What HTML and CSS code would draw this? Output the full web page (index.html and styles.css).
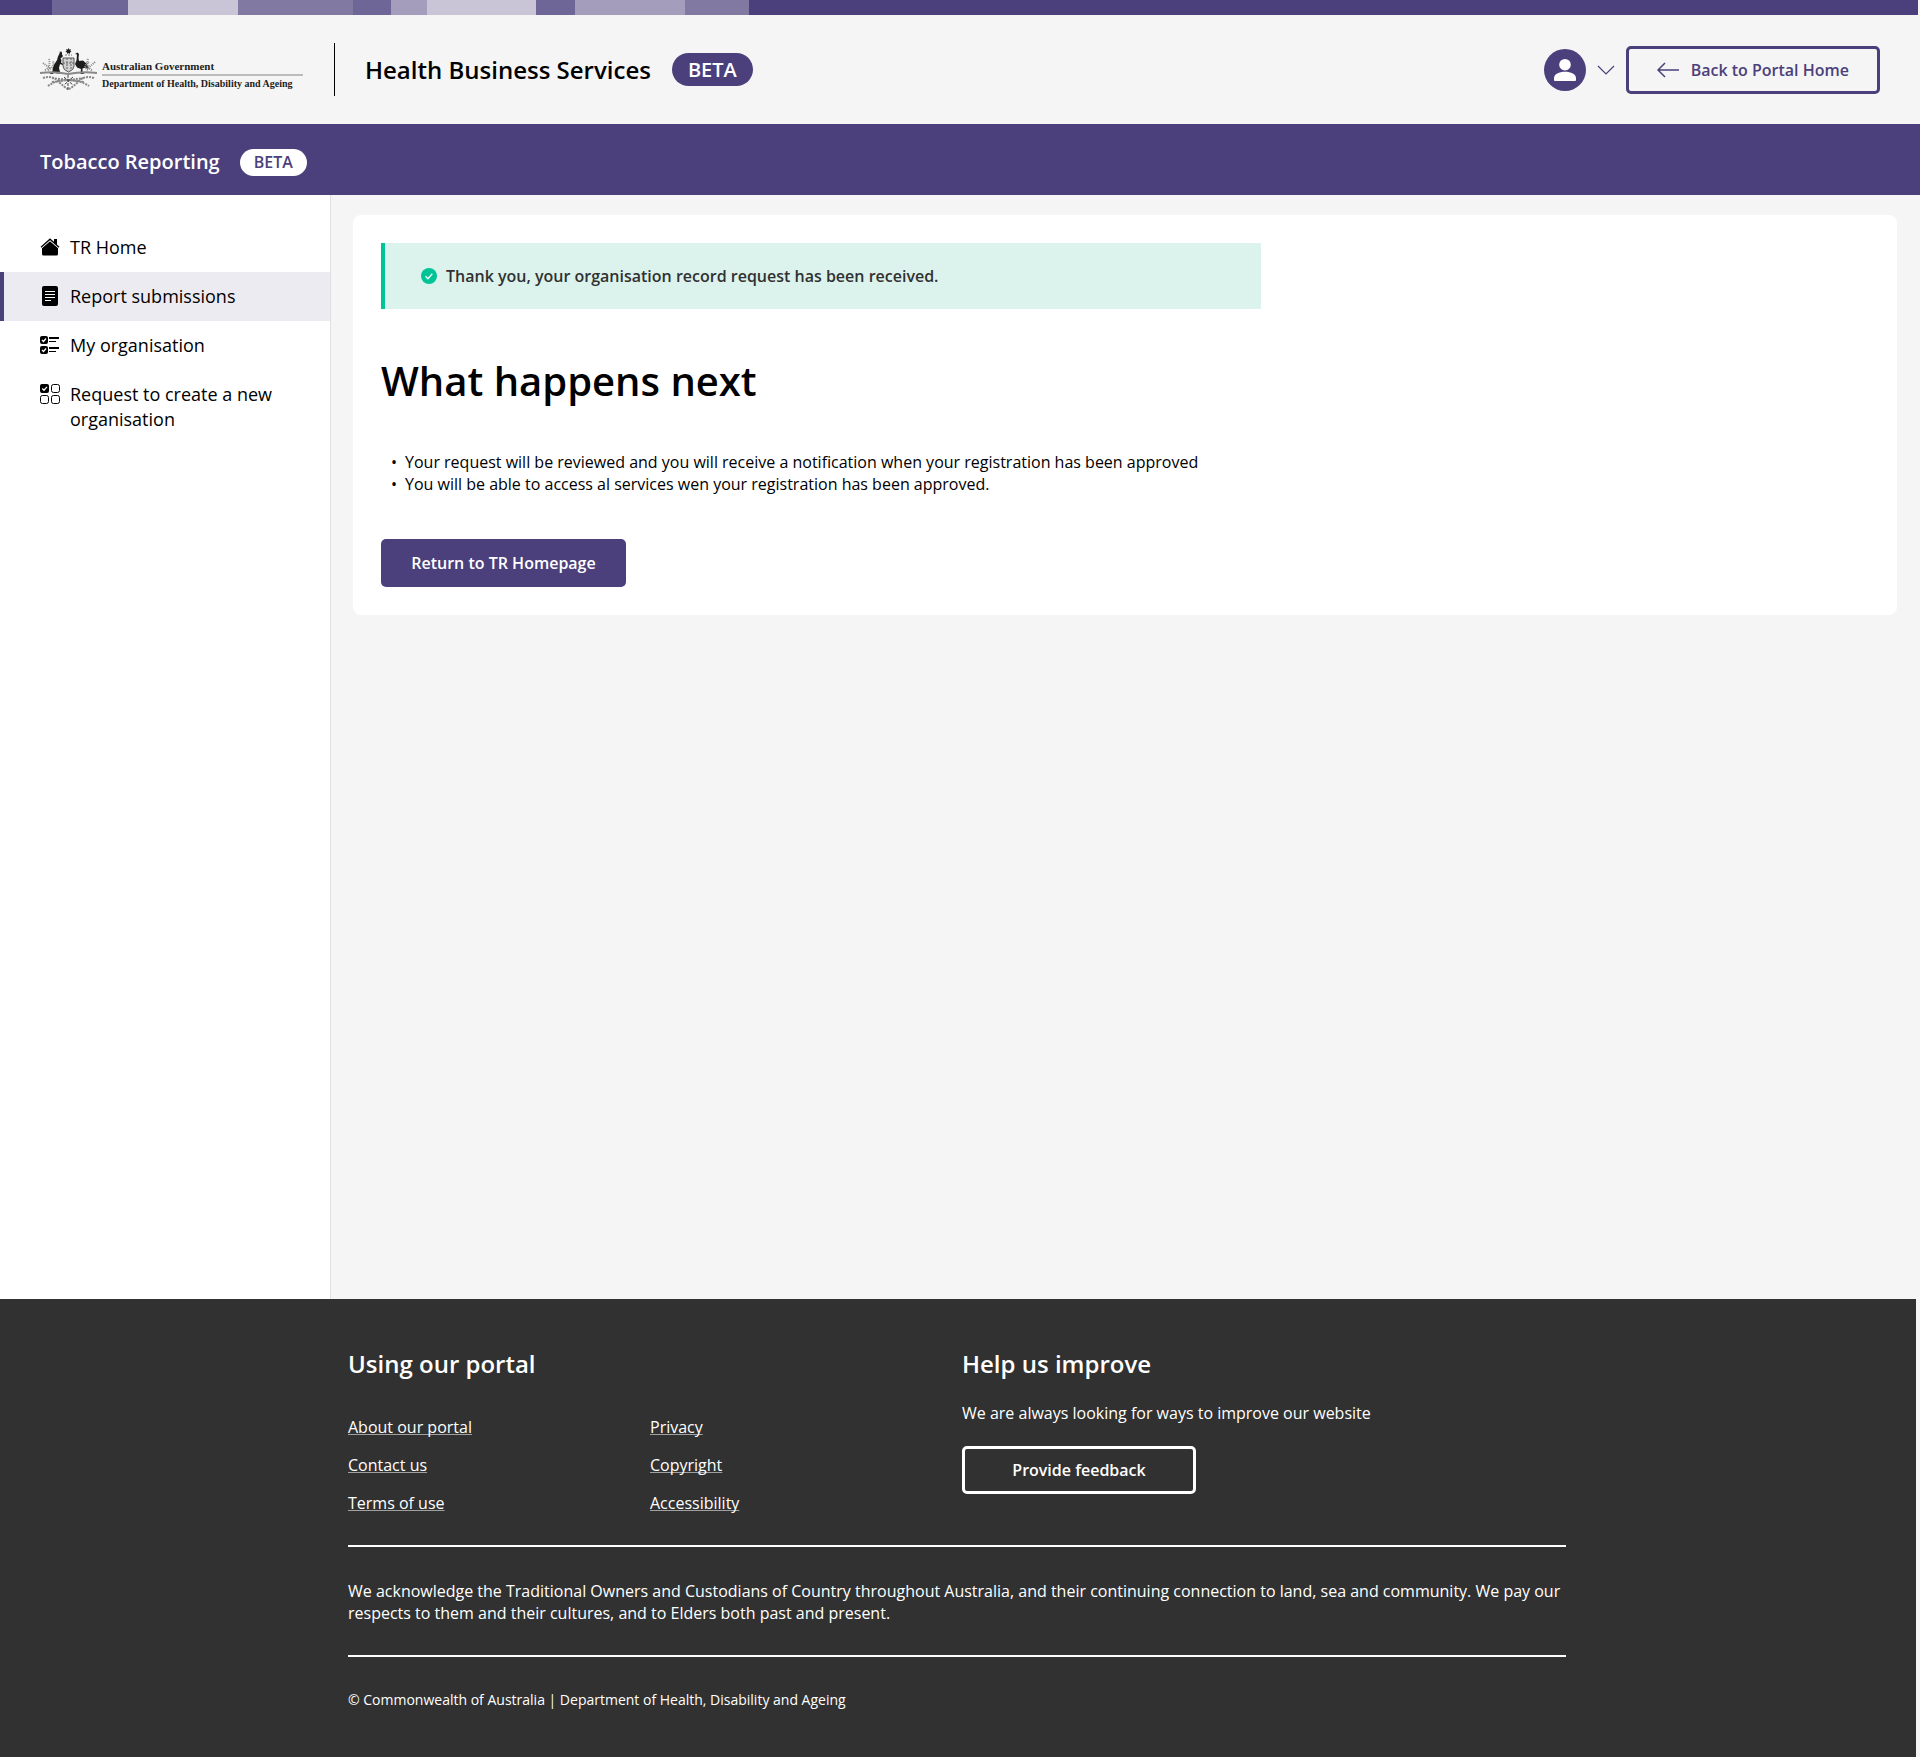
FILE: index.html
```html
<!DOCTYPE html>
<html lang="en">
<head>
    <meta charset="UTF-8">
    <meta name="viewport" content="width=device-width, initial-scale=1.0">
    <title>Tobacco Reporting - Health Business Services</title>
    <link rel="stylesheet" href="styles.css">
</head>
<body>

    <svg class="color-strip" width="749" height="15" aria-hidden="true">
        <rect x="52" width="76" height="15" fill="#6e6696"/>
        <rect x="128" width="110" height="15" fill="#c9c5d6"/>
        <rect x="238" width="115" height="15" fill="#8279a3"/>
        <rect x="353" width="38" height="15" fill="#6e6696"/>
        <rect x="391" width="36" height="15" fill="#a49ebc"/>
        <rect x="427" width="109" height="15" fill="#c9c5d6"/>
        <rect x="536" width="39" height="15" fill="#6e6696"/>
        <rect x="575" width="110" height="15" fill="#a49ebc"/>
        <rect x="685" width="64" height="15" fill="#8279a3"/>
    </svg>

    <header class="header">
        <div class="gov-logo">
            <svg width="57" height="43" viewBox="0 0 57 43" aria-hidden="true">
                <!-- star -->
                <path d="M28.500 0l.8 1.600 1.700-.4-.7 1.600 1.400 1.100-1.700.4v1.800l-1.500-1.100-1.500 1.100v-1.800l-1.700-.4 1.400-1.100-.7-1.600 1.700.4z" fill="#1d1d1b"/>
                <path d="M25 7h7" stroke="#777" stroke-dasharray="2 1"/>
                <!-- shield -->
                <path d="M23 10h11v8q0 4-5.500 6-5.500-2-5.500-6z" fill="#d0d0d0" stroke="#555"/>
                <path d="M23 15h11M27 10v12M31 10v12" stroke="#666" stroke-dasharray="2 1"/>
                <!-- kangaroo -->
                <path d="M20 3l1 1.500 1-1v3l1 1.500-1 1.500-1.500.5 1 2.500-.5 2 2 1.500-.5 1-2.500-1-1 4 1 4 1 1.500h-4l-2.500-1-2 1.500h-3l3-2.500q0-6 3-9 2-2.500 2.500-6l1.500-3z" fill="#1d1d1b"/>
                <!-- emu -->
                <path d="M35 6l2.500-1.500 1.500 1.500-.5 4 .5 3 4-.5 4 3.500 1.500 5-3-1.500-3 1v4l2 1.500h-4l.5-5-4-1.500-2-3.500 1.500-3.500.5-6z" fill="#1d1d1b"/>
                <!-- wattle -->
                <g fill="none" stroke="#888">
                    <path d="M0 25q14-2 28 1q15-3 29-1" stroke-width="2"/>
                    <path d="M3 30q9-3 15 3t10 8M54 30q-9-3-15 3t-10 8M8 38q8-6 20-6t21 6M12 34l32-4M12 30l32 4"
                          stroke-width="2" stroke-dasharray="2 1"/>
                    <path d="M5 22q6-2 4-11M8 22q7-3 5-9M3 15l8 6M52 22q-6-2-4-12M48 22q-6-3 1-8M55 14l-8 7"
                          stroke-width="2" stroke-dasharray="1 1"/>
                    <path d="M28 27v15M24 29l9 8M33 29l-9 8" stroke="#444" stroke-dasharray="3 1"/>
                </g>
            </svg>
            <div class="gov-text">
                <span class="gov-name">Australian Government</span>
                <span>Department of Health, Disability and Ageing</span>
            </div>
        </div>
        <div class="header-title">
            <span>Health Business Services</span>
            <span class="badge">BETA</span>
        </div>
        <div class="header-actions">
            <button class="user-menu" type="button" aria-label="Account menu">
                <svg width="42" height="42" viewBox="0 0 42 42" aria-hidden="true">
                    <circle cx="21" cy="21" r="21" fill="#4b407b"/>
                    <circle cx="21" cy="15.700" r="5.800" fill="#fff"/>
                    <path d="M10 31v-2c0-4 5-6.300 11-6.300s11 2.300 11 6.300v2q0 1-1 1H11q-1 0-1-1z" fill="#fff"/>
                </svg>
                <svg width="18" height="10" viewBox="0 0 18 10" aria-hidden="true">
                    <path d="M1 1l8 8 8-8" fill="none" stroke="#4b407b" stroke-width="1.200"/>
                </svg>
            </button>
            <a class="back-link" href="#">
                <svg width="22" height="16" viewBox="0 0 22 16" aria-hidden="true">
                    <path d="M22 8H1M8 1L1 8l7 7" fill="none" stroke="#4b407b" stroke-width="1.500"/>
                </svg>
                Back to Portal Home
            </a>
        </div>
    </header>

    <div class="app-bar">
        <span>Tobacco Reporting</span>
        <span class="badge badge-light">BETA</span>
    </div>

    <div class="layout">
        <nav class="sidebar">
            <a class="nav-item" href="#">
                <svg width="20" height="20" viewBox="0 0 20 20" aria-hidden="true">
                    <path d="M14 2h3v6l-3-2.500z"/>
                    <path d="M10 4l8 7v6q0 1.500-1.500 1.500h-13Q2 18.500 2 17v-6z"/>
                    <path d="M1.500 11.200L10 3.800l8.500 7.400" fill="none" stroke="#fff" stroke-width=".8"/>
                    <path d="M1 10.200l9-8 9 8" fill="none" stroke="#000" stroke-width="1.300"/>
                </svg>
                TR Home
            </a>
            <a class="nav-item active" href="#" aria-current="page">
                <svg width="20" height="20" viewBox="0 0 20 20" aria-hidden="true">
                    <rect x="2" y="0" width="16" height="20" rx="2"/>
                    <path d="M5 5.500h10M5 8.500h10M5 11.500h10M5 14.500h6" stroke="#fff"/>
                </svg>
                Report submissions
            </a>
            <a class="nav-item" href="#">
                <svg width="20" height="20" viewBox="0 0 20 20" aria-hidden="true">
                    <rect x="0" y="1" width="8" height="8" rx="2"/>
                    <rect x="0" y="11" width="8" height="8" rx="2"/>
                    <path d="M2 5l1.500 1.500L6 3.500M2 15l1.500 1.500L6 13.500" fill="none" stroke="#fff" stroke-width="1.200"/>
                    <path d="M9 3h10M9 13h10" stroke="#000" stroke-width="2"/>
                    <path d="M9 6.500h7M9 16.500h7" stroke="#000"/>
                </svg>
                My organisation
            </a>
            <a class="nav-item" href="#">
                <svg width="20" height="20" viewBox="0 0 20 20" aria-hidden="true">
                    <rect x="0" y="0" width="9" height="9" rx="2"/>
                    <path d="M2.300 4.500l1.700 1.700 3-3.300" fill="none" stroke="#fff" stroke-width="1.300"/>
                    <g fill="none" stroke="#000">
                        <rect x="11.500" y=".5" width="8" height="8" rx="2"/>
                        <rect x=".5" y="11.500" width="8" height="8" rx="2"/>
                        <rect x="11.500" y="11.500" width="8" height="8" rx="2"/>
                    </g>
                </svg>
                Request to create a new organisation
            </a>
        </nav>

        <main class="content">
            <section class="card">
                <div class="alert" role="status">
                    <svg width="16" height="16" viewBox="0 0 16 16" aria-hidden="true">
                        <circle cx="8" cy="8" r="8" fill="#00c496"/>
                        <path d="M4.500 8.300l2.400 2.400 4.400-5" fill="none" stroke="#fff" stroke-width="1.300"/>
                    </svg>
                    Thank you, your organisation record request has been received.
                </div>
                <h1>What happens next</h1>
                <ul class="steps">
                    <li>Your request will be reviewed and you will receive a notification when your registration has been approved</li>
                    <li>You will be able to access al services wen your registration has been approved.</li>
                </ul>
                <button class="btn-primary" type="button">Return to TR Homepage</button>
            </section>
        </main>
    </div>

    <footer class="footer">
        <div class="footer-inner">
            <div class="footer-top">
                <div class="footer-portal">
                    <h2>Using our portal</h2>
                    <div class="footer-links">
                        <a href="#">About our portal</a>
                        <a href="#">Privacy</a>
                        <a href="#">Contact us</a>
                        <a href="#">Copyright</a>
                        <a href="#">Terms of use</a>
                        <a href="#">Accessibility</a>
                    </div>
                </div>
                <div class="footer-help">
                    <h2>Help us improve</h2>
                    <p>We are always looking for ways to improve our website</p>
                    <button class="btn-outline" type="button">Provide feedback</button>
                </div>
            </div>
            <p class="acknowledgement">We acknowledge the Traditional Owners and Custodians of Country throughout Australia, and their continuing connection to land, sea and community. We pay our respects to them and their cultures, and to Elders both past and present.</p>
            <p class="copyright">© Commonwealth of Australia | Department of Health, Disability and Ageing</p>
        </div>
    </footer>

</body>
</html>
```
FILE: styles.css
```css
* {
    box-sizing: border-box;
}

body {
    margin: 0;
    min-height: 100vh;
    display: flex;
    flex-direction: column;
    background: #f5f5f5;
    color: #000;
    font-family: "Open Sans", sans-serif;
    font-size: 16px;
    line-height: 22px;
}

h1, h2, p, ul {
    margin: 0;
}

a {
    color: inherit;
    text-decoration: none;
}

button {
    font-family: inherit;
    cursor: pointer;
}

svg {
    flex-shrink: 0;
}

.color-strip {
    width: calc(100% - 2px);
    height: 15px;
    background: #4b407b;
}

/* Header */
.header {
    display: flex;
    align-items: center;
    height: 109px;
    padding: 0 40px;
}

.gov-logo {
    display: flex;
    align-items: center;
    gap: 5px;
    height: 53px;
    padding-right: 31px;
    border-right: 1px solid #000;
}

.gov-text {
    display: flex;
    flex-direction: column;
    width: 201px;
    padding-top: 10px;
    color: #1d1d1b;
    font-family: "Liberation Serif", serif;
    font-size: 10px;
    font-weight: bold;
    line-height: 16px;
}

.gov-name {
    border-bottom: 2px solid #bcbcbc;
    font-size: 11px;
}

.header-title {
    display: flex;
    align-items: center;
    gap: 21px;
    margin-left: 30px;
    font-size: 24px;
    font-weight: 600;
    line-height: 32px;
}

.badge {
    padding: 0 16px;
    border-radius: 17px;
    background: #4b407b;
    color: #fff;
    font-size: 20px;
    font-weight: 600;
    line-height: 33px;
}

.badge-light {
    padding: 0 14px;
    background: #fff;
    color: #4b407b;
    font-size: 16px;
    line-height: 27px;
}

.header-actions {
    display: flex;
    align-items: center;
    gap: 11px;
    margin-left: auto;
}

.user-menu {
    display: flex;
    align-items: center;
    gap: 11px;
    padding: 0;
    border: 0;
    background: none;
}

.back-link {
    display: flex;
    align-items: center;
    gap: 12px;
    height: 48px;
    padding: 0 28px;
    border: 3px solid #4b407b;
    border-radius: 5px;
    color: #4b407b;
    font-weight: 600;
}

.app-bar {
    display: flex;
    align-items: center;
    gap: 20px;
    height: 71px;
    padding: 5px 40px 0;
    background: #4b407b;
    color: #fff;
    font-size: 20px;
    font-weight: 600;
}

/* Page body */
.layout {
    display: flex;
    flex: 1;
}

.sidebar {
    width: 331px;
    flex-shrink: 0;
    padding-top: 28px;
    border-right: 1px solid #e0e0e0;
    background: #fff;
}

.nav-item {
    display: flex;
    gap: 10px;
    padding: 12px 40px 12px 36px;
    border-left: 4px solid transparent;
    font-size: 18px;
    line-height: 25px;
}

.nav-item svg {
    margin-top: 2px;
}

.nav-item.active {
    border-left-color: #4b407b;
    background: #edebf2;
}

.content {
    flex: 1;
    padding: 20px 23px 20px 22px;
}

.card {
    padding: 28px;
    border-radius: 8px;
    background: #fff;
}

.alert {
    display: flex;
    align-items: center;
    gap: 9px;
    max-width: 880px;
    height: 66px;
    padding-left: 36px;
    border-left: 4px solid #00c496;
    background: #dcf3ed;
    color: #313131;
    font-weight: 600;
}

h1 {
    margin-top: 43px;
    font-size: 40px;
    font-weight: 600;
    line-height: 58px;
}

.steps {
    margin: 41px 0 44px;
    padding-left: 24px;
    list-style-type: "•\2002";
}

.btn-primary {
    min-width: 245px;
    height: 48px;
    padding: 0 30px;
    border: 0;
    border-radius: 5px;
    background: #4b407b;
    color: #fff;
    font-size: 16px;
    font-weight: 600;
}

/* Footer */
.footer {
    margin-right: 4px;
    padding: 48px 20px 46px 348px;
    background: #313131;
    color: #fff;
}

.footer-inner {
    max-width: 1218px;
}

.footer-top {
    display: flex;
    padding-bottom: 31px;
}

.footer-portal {
    width: 614px;
}

.footer h2 {
    font-size: 24px;
    font-weight: 600;
    line-height: 34px;
}

.footer-links {
    display: grid;
    grid-template-columns: 302px auto;
    justify-items: start;
    row-gap: 16px;
    margin-top: 35px;
}

.footer-links a {
    text-decoration: underline 1px #a0a0a0;
    text-decoration-skip-ink: none;
}

.footer-help p {
    margin: 21px 0 22px;
}

.btn-outline {
    width: 234px;
    height: 48px;
    border: 3px solid #fff;
    border-radius: 5px;
    background: none;
    color: #fff;
    font-size: 16px;
    font-weight: 600;
}

.acknowledgement {
    padding: 33px 0 31px;
    border-top: 2px solid #fff;
    border-bottom: 2px solid #fff;
}

.copyright {
    padding-top: 32px;
    font-size: 14px;
}
```
